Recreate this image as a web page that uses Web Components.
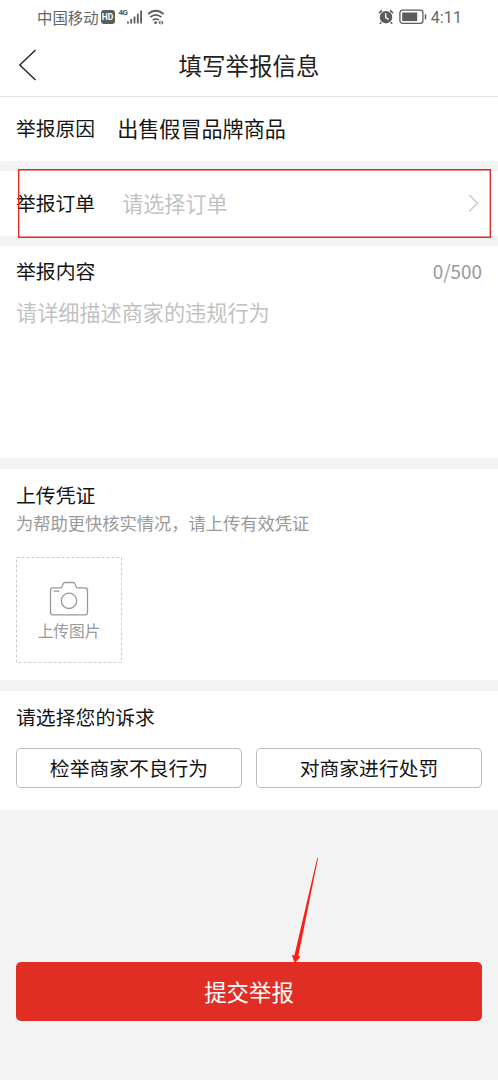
<!DOCTYPE html>
<html lang="zh-CN">
<head>
<meta charset="utf-8">
<title>填写举报信息</title>
<style>
html,body{margin:0;padding:0}
body{background:#f3f3f3;font-family:"Noto Sans CJK SC","Noto Sans",sans-serif;color:#151515;overflow:hidden}
</style>
</head>
<body>
<report-page></report-page>
<script>
const define = (name, html) => {
  const template = document.createElement('template');
  template.innerHTML = html;
  customElements.define(name, class extends HTMLElement {
    constructor() {
      super();
      this.attachShadow({ mode: 'open' }).append(template.content.cloneNode(true));
    }
  });
};

define('status-bar', `
<style>
:host{display:flex;height:35px;padding:0 36px 0 37px;box-sizing:border-box;align-items:center;color:#666;font-size:15.4px;line-height:22px}
span{white-space:nowrap}
.carrier{margin-top:-2px}
.time{font-family:Roboto,sans-serif;font-size:16px;letter-spacing:.1px;margin:0 0 0 4px}
svg{display:block;flex:none}
.gap{flex:1}
.hd{background:#5c5c5c;color:#fff;border-radius:3px;width:14px;height:14px;font:bold 8.5px/14px Roboto,sans-serif;text-align:center;margin:-2px 0 0 2px}
.net{font:bold 8px/9px Roboto,sans-serif;width:9px;margin:-10px 0 0 4px;letter-spacing:-.6px;color:#555}
</style>
<span class="carrier">中国移动</span><span class="hd">HD</span><span class="net">4G</span>
<svg width="16" height="16" viewBox="0 0 16 16" fill="#5c5c5c" style="margin:-2px 0 0 -1px"><path d="M0 12.500h1.800v2H0zM3.300 10h1.800v4.500H3.300zM6.600 7.500h1.800v7H6.600zM9.900 4.700h1.800v9.800H9.900zM13.200 1.500h1.800v13H13.200z"/></svg>
<svg width="18" height="16" viewBox="0 0 18 16" fill="none" stroke="#5c5c5c" stroke-width="1.7" style="margin:-2px 0 0 4px"><path d="M1 5q7.800-6.500 15.600 0M3.200 8.200q5.600-4.600 11.200 0M5.700 11.200q3.100-2.400 6.200 0"/><circle cx="8.600" cy="13.700" r="1.400" fill="#5c5c5c" stroke="none"/><path d="M13.500 11.400l-2.100 2.200 2.100 2.200zM14.600 11.400l2.100 2.200-2.100 2.200z" fill="#5c5c5c" stroke="none"/></svg>
<span class="gap"></span>
<svg width="16" height="16" viewBox="0 0 16 16" style="margin-top:-2px"><circle cx="8" cy="8.200" r="6.200" fill="#5c5c5c"/><path d="M1 4.200L4 1.300M12 1.300l3 2.900M3.300 13.200l-1.500 1.500M12.700 13.200l1.500 1.500" stroke="#5c5c5c" stroke-width="1.600"/><path d="M7.700 4.300v4.300l3 1.800" fill="none" stroke="#fff" stroke-width="1.300"/></svg>
<svg width="28" height="16" viewBox="0 0 28 16" style="margin:-2px 0 0 5px"><rect x=".9" y="1.200" width="23" height="13.200" rx="2.600" fill="none" stroke="#5c5c5c" stroke-width="1.300"/><path d="M3.200 3.500h15v8.600h-15z" fill="#5c5c5c"/><path d="M26.500 5.300v5" stroke="#5c5c5c" stroke-width="1.500"/></svg>
<span class="time">4:11</span>`);

define('page-header', `
<style>
:host{display:grid;grid-template-columns:60px 1fr 60px;height:62px;box-sizing:border-box;border-bottom:1px solid #e4e4e4;align-items:center;text-align:center;font-size:23.5px;line-height:34px;color:#222}
svg{display:block;margin:-2px 0 0 18px}
h1{font:inherit;margin:-1px 0 0}
</style>
<svg width="20" height="32" viewBox="0 0 20 32" fill="none" stroke="#222" stroke-width="1.4"><path d="M17.500 1L1.800 16 17.500 31"/></svg>
<h1><slot></slot></h1>`);

define('form-section', `
<style>
:host{display:block;background:#fff;padding:0 16px;box-sizing:border-box;position:relative}
</style><slot></slot>`);

define('form-row', `
<style>
:host{display:flex;align-items:center;height:100%;padding-bottom:2px;box-sizing:border-box;font-size:19.8px;line-height:30px}
.value{font-size:21.1px;margin-left:var(--gap,22px);color:var(--value,#151515);flex:1}
</style>
<span><slot name="label"></slot></span><span class="value"><slot></slot></span><slot name="end"></slot>`);

define('chevron-icon', `
<style>:host{display:block;margin-right:1px}svg{display:block}</style>
<svg width="14" height="20" viewBox="0 0 14 20" fill="none" stroke="#ccc" stroke-width="1.6"><path d="M2 1.700l8.500 8.500L2 18.500"/></svg>`);

define('upload-tile', `
<style>
:host{display:flex;flex-direction:column;align-items:center;width:106px;height:106px;box-sizing:border-box;padding-top:24px;color:#999;font-size:15.7px;line-height:22px;position:relative}
svg{display:block}
.frame{position:absolute;inset:0}
span{margin-top:3px}
</style>
<svg class="frame" width="106" height="106" fill="none" stroke="#ccc" stroke-dasharray="3 2"><path d="M.5.5h105v105H.5z"/></svg>
<svg width="40" height="36" viewBox="0 0 40 36" fill="none" stroke="#999" stroke-width="1.300"><path d="M4 6.800h7.500q1.200 0 1.600-1.200l1-2.700q.5-1.400 2-1.400h8q1.500 0 2 1.400l1 2.700q.4 1.200 1.600 1.200H36q2.500 0 2.500 2.500v22q0 2.500-2.500 2.500H4q-2.500 0-2.500-2.500v-22Q1.500 6.800 4 6.800zM4.500 10.200h6"/><circle cx="20" cy="19.800" r="7.700"/></svg>
<span><slot></slot></span>`);

define('choice-button', `
<style>
:host{display:block;flex:1}
button{display:block;width:100%;height:40px;box-sizing:border-box;border:1px solid #bbb;border-radius:5px;background:#fff;font:inherit;font-size:19.8px;line-height:37px;padding:0 0 1px;color:#151515}
</style><button><slot></slot></button>`);

define('submit-button', `
<style>
:host{display:block;position:relative}
button{display:block;width:100%;height:59px;border:0;border-radius:5px;background:#e02e24;color:#fff;font:inherit;font-size:22.4px;line-height:56px;padding:0 0 2px}
</style><button><slot></slot></button><slot name="over"></slot>`);

define('pointer-arrow', `
<style>:host{display:block;position:absolute;left:274px;top:-106px}svg{display:block}</style>
<svg width="30" height="108" viewBox="0 0 30 108"><path d="M27.200 2L28 2.200 8.300 100l2.300.5L4.900 107.300 1.800 99l2.600.4z" fill="#fa1e14"/></svg>`);

define('report-page', `
<style>
:host{display:flex;flex-direction:column;height:1080px;width:498px}
.top{background:#fff;height:97px}
.reason{height:64px}
.order{height:65px;margin-top:10px;--gap:27px;--value:#c2c2c2}
.mark{position:absolute;left:18px;top:-2px;width:473px;height:69px;box-sizing:border-box;z-index:1}
.mark svg{display:block}
.content{height:212px;margin-top:10px;padding-top:10px}
.proof{height:211px;margin-top:11px;padding-top:11px}
.appeal{height:119px;margin-top:11px;padding-top:11px}
.head{display:flex;justify-content:space-between;font-size:19.85px;line-height:30px}
.count{font-size:18.9px;color:#999}
.hint{font-size:21.15px;line-height:32px;color:#c2c2c2;margin-top:10px}
.note{font-size:17.25px;line-height:26px;color:#999}
upload-tile{margin-top:21px}
.choices{display:flex;gap:14px;margin-top:16px}
submit-button{margin:152px 16px 0}
</style>
<div class="top"><status-bar></status-bar><page-header>填写举报信息</page-header></div>
<form-section class="reason"><form-row><span slot="label">举报原因</span>出售假冒品牌商品</form-row></form-section>
<form-section class="order"><form-row><span slot="label">举报订单</span>请选择订单<chevron-icon slot="end"></chevron-icon></form-row><div class="mark"><svg width="473" height="69" fill="none" stroke="#e32a20" stroke-width="1.400"><path d="M.7.7h471.600v67.600H.7z"/></svg></div></form-section>
<form-section class="content"><div class="head"><span>举报内容</span><span class="count">0/500</span></div><div class="hint">请详细描述商家的违规行为</div></form-section>
<form-section class="proof"><div class="head">上传凭证</div><div class="note">为帮助更快核实情况，请上传有效凭证</div><upload-tile>上传图片</upload-tile></form-section>
<form-section class="appeal"><div class="head">请选择您的诉求</div><div class="choices"><choice-button>检举商家不良行为</choice-button><choice-button>对商家进行处罚</choice-button></div></form-section>
<submit-button>提交举报<pointer-arrow slot="over"></pointer-arrow></submit-button>`);
</script>
</body>
</html>
